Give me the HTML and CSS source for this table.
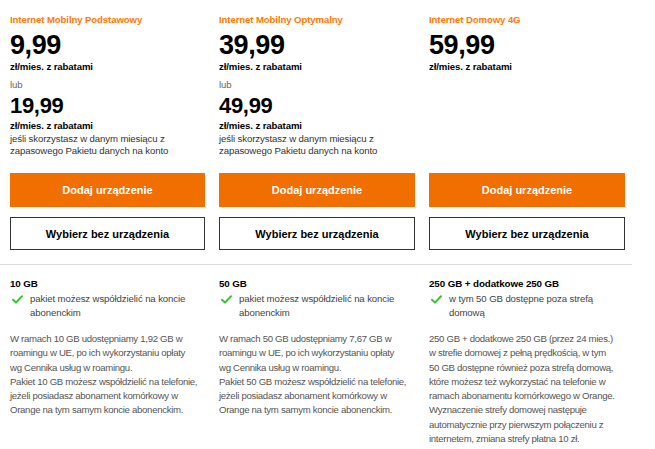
FILE: index.html
```html
<!DOCTYPE html>
<html lang="pl">
<head>
<meta charset="utf-8">
<link rel="stylesheet" href="styles.css">
</head>
<body>
<div class="page">
  <section class="offers">
    <div class="offer">
      <div class="info">
        <h2 class="name">Internet Mobilny Podstawowy</h2>
        <div class="price">9,99</div>
        <div class="unit">zł/mies. z rabatami</div>
        <div class="or">lub</div>
        <div class="price alt">19,99</div>
        <div class="unit second">zł/mies. z rabatami</div>
        <p class="note">jeśli skorzystasz w danym miesiącu z zapasowego Pakietu danych na konto</p>
      </div>
      <div class="actions">
        <button class="btn primary">Dodaj urządzenie</button>
        <button class="btn outline">Wybierz bez urządzenia</button>
      </div>
    </div>
    <div class="offer">
      <div class="info">
        <h2 class="name">Internet Mobilny Optymalny</h2>
        <div class="price">39,99</div>
        <div class="unit">zł/mies. z rabatami</div>
        <div class="or">lub</div>
        <div class="price alt">49,99</div>
        <div class="unit second">zł/mies. z rabatami</div>
        <p class="note">jeśli skorzystasz w danym miesiącu z zapasowego Pakietu danych na konto</p>
      </div>
      <div class="actions">
        <button class="btn primary">Dodaj urządzenie</button>
        <button class="btn outline">Wybierz bez urządzenia</button>
      </div>
    </div>
    <div class="offer">
      <div class="info">
        <h2 class="name">Internet Domowy 4G</h2>
        <div class="price">59,99</div>
        <div class="unit">zł/mies. z rabatami</div>
      </div>
      <div class="actions">
        <button class="btn primary">Dodaj urządzenie</button>
        <button class="btn outline">Wybierz bez urządzenia</button>
      </div>
    </div>
  </section>
  <section class="details">
    <div class="detail">
      <h3 class="data">10 GB</h3>
      <div class="feature">
        <svg class="check" viewBox="0 0 12 10" aria-hidden="true"><path d="M1 5.2 L4.3 8.4 L11 1.4" fill="none" stroke="#32c832" stroke-width="2.2" stroke-linecap="round" stroke-linejoin="round"/></svg>
        <span>pakiet możesz współdzielić na koncie abonenckim</span>
      </div>
      <p class="desc">W ramach 10 GB udostępniamy 1,92 GB w roamingu w UE, po ich wykorzystaniu opłaty wg&nbsp;Cennika usług w roamingu.<br>Pakiet 10 GB możesz współdzielić na telefonie, jeżeli posiadasz abonament komórkowy w Orange na tym samym koncie abonenckim.</p>
    </div>
    <div class="detail">
      <h3 class="data">50 GB</h3>
      <div class="feature">
        <svg class="check" viewBox="0 0 12 10" aria-hidden="true"><path d="M1 5.2 L4.3 8.4 L11 1.4" fill="none" stroke="#32c832" stroke-width="2.2" stroke-linecap="round" stroke-linejoin="round"/></svg>
        <span>pakiet możesz współdzielić na koncie abonenckim</span>
      </div>
      <p class="desc">W ramach 50 GB udostępniamy 7,67 GB w roamingu w UE, po ich wykorzystaniu opłaty wg&nbsp;Cennika usług w roamingu.<br>Pakiet 50 GB możesz współdzielić na telefonie, jeżeli posiadasz abonament komórkowy w Orange na tym samym koncie abonenckim.</p>
    </div>
    <div class="detail">
      <h3 class="data">250 GB + dodatkowe 250 GB</h3>
      <div class="feature">
        <svg class="check" viewBox="0 0 12 10" aria-hidden="true"><path d="M1 5.2 L4.3 8.4 L11 1.4" fill="none" stroke="#32c832" stroke-width="2.2" stroke-linecap="round" stroke-linejoin="round"/></svg>
        <span>w tym 50 GB dostępne poza strefą domową</span>
      </div>
      <p class="desc">250 GB + dodatkowe 250 GB (przez 24 mies.) w&nbsp;strefie domowej z pełną prędkością, w tym 50&nbsp;GB dostępne również poza strefą domową, które możesz też wykorzystać na telefonie w ramach abonamentu komórkowego w Orange. Wyznaczenie strefy domowej następuje automatycznie przy pierwszym połączeniu z internetem, zmiana strefy płatna 10 zł.</p>
    </div>
  </section>
</div>
</body>
</html>
```

FILE: styles.css
```css
* { box-sizing: border-box; }
html, body { margin: 0; padding: 0; background: #fff; }
body {
  font-family: "Liberation Sans", Arial, sans-serif;
  color: #000;
  font-size: 9.6px;
  letter-spacing: -0.1px;
}
.page { width: 632px; }
.offers, .details {
  display: grid;
  grid-template-columns: 195px 196px 196px;
  column-gap: 14px;
  padding-left: 10px;
}
.offers {
  padding-top: 13px;
  padding-bottom: 14px;
  border-bottom: 1px solid #dcdcdc;
}
.offer {
  display: flex;
  flex-direction: column;
  justify-content: space-between;
}
.name {
  margin: 0;
  font-size: 9.6px;
  line-height: 14px;
  font-weight: bold;
  color: #ff7900;
}
.price {
  margin-top: 4px;
  font-size: 27px;
  line-height: 28px;
  font-weight: bold;
  letter-spacing: -0.4px;
}
.price.alt {
  margin-top: 3px;
  font-size: 22px;
  line-height: 22px;
  letter-spacing: -0.3px;
}
.unit {
  margin-top: 1px;
  font-weight: bold;
  line-height: 14px;
}
.unit.second { margin-top: 2px; }
.or {
  margin-top: 4px;
  color: #666;
  line-height: 14px;
}
.note {
  margin: 0;
  color: #333;
  line-height: 12px;
}
.actions {
  display: flex;
  flex-direction: column;
  gap: 10px;
  margin-top: 16px;
}
.btn {
  font-family: "Liberation Sans", Arial, sans-serif;
  font-size: 11px;
  font-weight: bold;
  height: 34px;
  width: 100%;
  cursor: pointer;
  letter-spacing: 0;
}
.btn.primary {
  background: #f16e00;
  color: #fff;
  border: none;
}
.btn.outline {
  height: 33px;
  background: #fff;
  color: #000;
  border: 1.5px solid #333;
}
.details {
  padding-top: 12px;
}
.data {
  margin: 0;
  font-size: 9.8px;
  line-height: 14px;
  font-weight: bold;
}
.feature {
  display: flex;
  align-items: flex-start;
  gap: 7px;
  margin-top: 1px;
  padding-left: 2px;
  color: #444;
  line-height: 13.5px;
}
.check {
  width: 11px;
  height: 9px;
  flex: none;
  margin-top: 3px;
}
.desc {
  margin: 13px 0 0;
  color: #555;
  line-height: 14.3px;
  letter-spacing: -0.3px;
}
```
